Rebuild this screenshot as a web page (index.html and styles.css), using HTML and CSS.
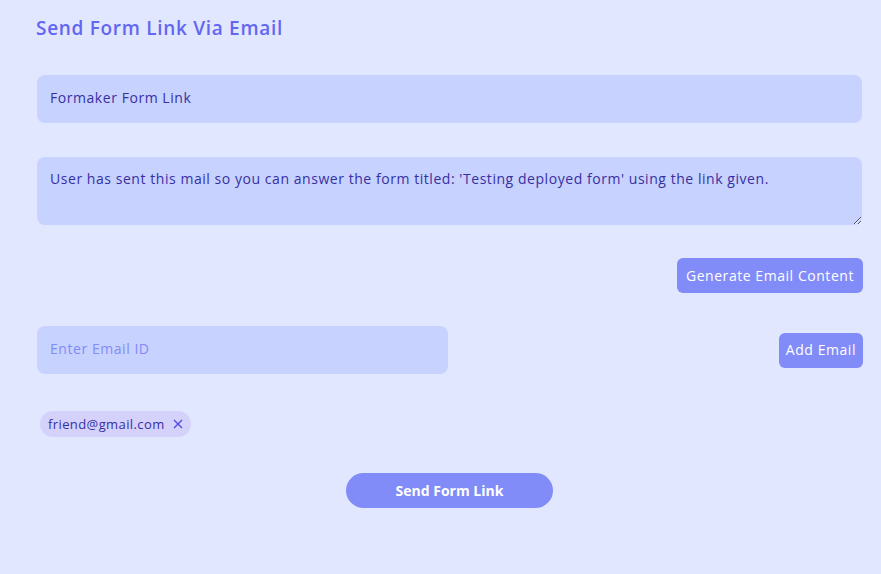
FILE: index.html
```html
<!DOCTYPE html>
<html lang="en">
<head>
<meta charset="utf-8">
<title>Send Form Link Via Email</title>
<link rel="stylesheet" href="styles.css">
</head>
<body>
<main class="page">
  <h1 class="title">Send Form Link Via Email</h1>
  <input class="field subject" type="text" value="Formaker Form Link">
  <textarea class="field body-text">User has sent this mail so you can answer the form titled: 'Testing deployed form' using the link given.</textarea>
  <div class="row-end">
    <button class="btn gen">Generate Email Content</button>
  </div>
  <div class="email-row">
    <input class="field email" type="text" placeholder="Enter Email ID">
    <button class="btn">Add Email</button>
  </div>
  <div class="chips">
    <span class="chip">friend@gmail.com <span class="chip-x">
      <svg width="10" height="10" viewBox="0 0 10 10"><path d="M1 1L9 9M9 1L1 9" stroke="currentColor" stroke-width="1.3" fill="none"/></svg>
    </span></span>
  </div>
  <div class="send-row">
    <button class="send">Send Form Link</button>
  </div>
</main>
</body>
</html>
```
FILE: styles.css
```css
html, body {
  margin: 0;
  padding: 0;
  background: #e0e7ff;
  font-family: "Open Sans", "DejaVu Sans", sans-serif;
}
.page {
  padding: 14px 19px 0 37px;
  display: flex;
  flex-direction: column;
}
.title {
  margin: 0 0 0 -1px;
  font-size: 19px;
  font-weight: 600;
  letter-spacing: 0.7px;
  color: #6366f1;
  line-height: 28px;
}
.field {
  box-sizing: border-box;
  width: 100%;
  border: none;
  background: #c7d2fe;
  border-radius: 8px;
  font-family: inherit;
  font-size: 14px;
  letter-spacing: 0.55px;
  color: #3730a3;
  padding: 0 13px 3px;
  outline: none;
}
.subject {
  margin-top: 33px;
  height: 48px;
}
.body-text {
  margin-top: 34px;
  height: 68px;
  padding-top: 12px;
  resize: vertical;
  line-height: 20px;
  display: block;
}
.row-end {
  display: flex;
  justify-content: flex-end;
  margin-top: 33px;
  margin-right: -1px;
}
.btn {
  border: none;
  background: #818cf8;
  color: #ffffff;
  font-family: inherit;
  font-size: 14px;
  letter-spacing: 0.55px;
  border-radius: 6px;
  height: 35px;
  padding: 0 7px 1px;
}
.gen {
  padding: 0 9px 1px;
}
.email-row {
  display: flex;
  justify-content: space-between;
  align-items: center;
  margin-top: 33px;
  margin-right: -1px;
}
.email {
  width: 411px;
  height: 48px;
}
.email::placeholder {
  color: #818cf8;
}
.chips {
  margin-top: 37px;
  padding-left: 3px;
  display: flex;
}
.chip {
  display: inline-flex;
  align-items: center;
  gap: 8px;
  height: 26px;
  padding: 0 8px;
  border-radius: 13px;
  background: #d4d1fb;
  color: #3730a3;
  font-size: 13px;
  letter-spacing: 0.4px;
}
.chip-x {
  display: inline-flex;
  color: #4f46e5;
}
.send-row {
  display: flex;
  justify-content: center;
  margin-top: 36px;
}
.send {
  width: 207px;
  height: 35px;
  border: none;
  border-radius: 18px;
  background: #818cf8;
  color: #ffffff;
  font-family: inherit;
  font-weight: 700;
  font-size: 14px;
}
```
